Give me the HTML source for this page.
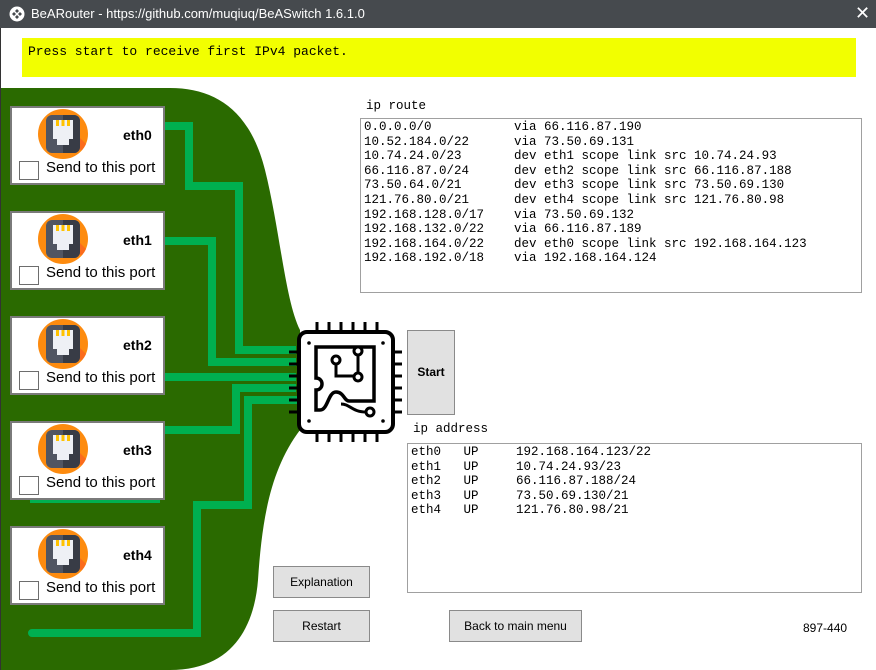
<!DOCTYPE html>
<html><head><meta charset="utf-8"><style>
*{margin:0;padding:0;box-sizing:border-box}
body{width:876px;height:670px;background:#fff;position:relative;overflow:hidden;font-family:"Liberation Sans",sans-serif}
.title{position:absolute;left:0;top:0;width:876px;height:28px;background:#464a4e;color:#fff;font-size:13px;line-height:27px;padding-left:31px}
.abs{position:absolute}
.mono{font-family:"Liberation Mono",monospace;font-size:12.5px}
.port{position:absolute;left:10px;width:155px;height:79px;background:#fff;border:2px solid #7a7a7a}
.port .nm{position:absolute;left:111px;top:19px;font-weight:bold;font-size:14px}
.port .cb{position:absolute;left:7px;top:53px;width:20px;height:19px;border:1px solid #6d6d6d;background:#fff}
.port .st{position:absolute;left:34px;top:51px;font-size:15px;color:#000}
.port svg{position:absolute;left:26px;top:1px}
.btn{position:absolute;background:#e1e1e1;border:1px solid #8a8a8a;font-size:12px;text-align:center}
.box{position:absolute;border:1px solid #a0a0a0;background:#fff;white-space:pre;line-height:14.6px;padding:1px 3px;color:#000}
</style></head><body>
<div class="title">BeARouter - https://github.com/muqiuq/BeASwitch 1.6.1.0</div>
<svg class="abs" style="left:9px;top:6px" width="16" height="16" viewBox="0 0 16 16"><circle cx="8" cy="8" r="7.5" fill="#fff"/><g fill="#464a4e"><path d="M8 3l2 2-2 2-2-2z"/><path d="M8 9l2 2-2 2-2-2z"/><path d="M3 8l2-2 2 2-2 2z"/><path d="M9 8l2-2 2 2-2 2z"/></g></svg>
<div class="abs" style="left:855px;top:3px;color:#fff;font-size:18px">✕</div>
<div class="abs mono" style="left:22px;top:38px;width:834px;height:39px;background:#f2ff00;padding:6px 6px;font-size:13px">Press start to receive first IPv4 packet.</div>

<svg class="abs" style="left:0;top:0" width="876" height="670">
<path d="M0 88 L170 88 C215 88 250 110 265 170 C280 230 285 300 300 330 L300 430 C270 470 262 520 258 580 C254 630 230 670 170 670 L0 670 Z" fill="#2a6a00"/>
<line x1="0" y1="28" x2="0" y2="670" stroke="#333" stroke-width="2"/>
<g fill="none" stroke="#00b050" stroke-width="8" stroke-linejoin="miter">
<path d="M160 126 H189 V186 H239 V350 H296"/>
<path d="M160 241 H212 V362 H296"/>
<path d="M160 377 H296"/>
<path d="M160 430 H236 V388 H296"/>
<path d="M296 400 H248 V505 H197 V633 H32" stroke-linecap="round"/>
<path d="M30 499 H160"/>
</g>
<g fill="none" stroke="#000" stroke-width="4">
<rect x="299" y="332" width="94" height="100" rx="8"/>
<path d="M316 347 H374 V401 H349 C344 401 344 392 336 392 C328 392 328 410 320 410 H316 V390 C324 390 324 378 316 378 Z" stroke-width="3.5"/>
<path d="M336 360 V376 H358 M358 376 V354" stroke-width="3"/>
</g>
<g fill="#fff" stroke="#000" stroke-width="3"><circle cx="336" cy="360" r="4"/><circle cx="358" cy="351" r="4"/><circle cx="358" cy="377" r="4"/><circle cx="370" cy="412" r="4"/></g>
<path d="M341 404 C350 404 352 412 366 412" stroke="#000" stroke-width="3" fill="none"/>
<g fill="#000"><circle cx="309" cy="343" r="1.8"/><circle cx="383" cy="343" r="1.8"/><circle cx="309" cy="421" r="1.8"/><circle cx="383" cy="421" r="1.8"/></g>
<g stroke="#000" stroke-width="3">
<path d="M317 322V332M329 322V332M341 322V332M353 322V332M365 322V332M377 322V332"/>
<path d="M317 432V442M329 432V442M341 432V442M353 432V442M365 432V442M377 432V442"/>
<path d="M289 352H299M289 364H299M289 376H299M289 388H299M289 400H299M289 412H299"/>
<path d="M393 352H402M393 364H402M393 376H402M393 388H402M393 400H402M393 412H402"/>
</g>
</svg>

<div class="port" style="top:106px"><svg width="50" height="50" viewBox="0 0 50 50"><circle cx="25" cy="25" r="25" fill="#fd8b0f"/><path d="M38 40 L44 41 A25 25 0 0 0 48 35 L41 28 Z" fill="#fb6b1c"/><rect x="8" y="6" width="34" height="38" rx="6" fill="#505562"/><path d="M25 6H36a6 6 0 0 1 6 6V38a6 6 0 0 1-6 6H25z" fill="#383c46"/><path d="M15 11H35V30H31V36H19V30H15Z" fill="#eef0f5"/><rect x="18" y="11" width="3" height="6" fill="#ffc200"/><rect x="23.5" y="11" width="3" height="6" fill="#ffc200"/><rect x="29" y="11" width="3" height="6" fill="#ffc200"/></svg><div class="nm">eth0</div><div class="cb"></div><div class="st">Send to this port</div></div>
<div class="port" style="top:211px"><svg width="50" height="50" viewBox="0 0 50 50"><circle cx="25" cy="25" r="25" fill="#fd8b0f"/><path d="M38 40 L44 41 A25 25 0 0 0 48 35 L41 28 Z" fill="#fb6b1c"/><rect x="8" y="6" width="34" height="38" rx="6" fill="#505562"/><path d="M25 6H36a6 6 0 0 1 6 6V38a6 6 0 0 1-6 6H25z" fill="#383c46"/><path d="M15 11H35V30H31V36H19V30H15Z" fill="#eef0f5"/><rect x="18" y="11" width="3" height="6" fill="#ffc200"/><rect x="23.5" y="11" width="3" height="6" fill="#ffc200"/><rect x="29" y="11" width="3" height="6" fill="#ffc200"/></svg><div class="nm">eth1</div><div class="cb"></div><div class="st">Send to this port</div></div>
<div class="port" style="top:316px"><svg width="50" height="50" viewBox="0 0 50 50"><circle cx="25" cy="25" r="25" fill="#fd8b0f"/><path d="M38 40 L44 41 A25 25 0 0 0 48 35 L41 28 Z" fill="#fb6b1c"/><rect x="8" y="6" width="34" height="38" rx="6" fill="#505562"/><path d="M25 6H36a6 6 0 0 1 6 6V38a6 6 0 0 1-6 6H25z" fill="#383c46"/><path d="M15 11H35V30H31V36H19V30H15Z" fill="#eef0f5"/><rect x="18" y="11" width="3" height="6" fill="#ffc200"/><rect x="23.5" y="11" width="3" height="6" fill="#ffc200"/><rect x="29" y="11" width="3" height="6" fill="#ffc200"/></svg><div class="nm">eth2</div><div class="cb"></div><div class="st">Send to this port</div></div>
<div class="port" style="top:421px"><svg width="50" height="50" viewBox="0 0 50 50"><circle cx="25" cy="25" r="25" fill="#fd8b0f"/><path d="M38 40 L44 41 A25 25 0 0 0 48 35 L41 28 Z" fill="#fb6b1c"/><rect x="8" y="6" width="34" height="38" rx="6" fill="#505562"/><path d="M25 6H36a6 6 0 0 1 6 6V38a6 6 0 0 1-6 6H25z" fill="#383c46"/><path d="M15 11H35V30H31V36H19V30H15Z" fill="#eef0f5"/><rect x="18" y="11" width="3" height="6" fill="#ffc200"/><rect x="23.5" y="11" width="3" height="6" fill="#ffc200"/><rect x="29" y="11" width="3" height="6" fill="#ffc200"/></svg><div class="nm">eth3</div><div class="cb"></div><div class="st">Send to this port</div></div>
<div class="port" style="top:526px"><svg width="50" height="50" viewBox="0 0 50 50"><circle cx="25" cy="25" r="25" fill="#fd8b0f"/><path d="M38 40 L44 41 A25 25 0 0 0 48 35 L41 28 Z" fill="#fb6b1c"/><rect x="8" y="6" width="34" height="38" rx="6" fill="#505562"/><path d="M25 6H36a6 6 0 0 1 6 6V38a6 6 0 0 1-6 6H25z" fill="#383c46"/><path d="M15 11H35V30H31V36H19V30H15Z" fill="#eef0f5"/><rect x="18" y="11" width="3" height="6" fill="#ffc200"/><rect x="23.5" y="11" width="3" height="6" fill="#ffc200"/><rect x="29" y="11" width="3" height="6" fill="#ffc200"/></svg><div class="nm">eth4</div><div class="cb"></div><div class="st">Send to this port</div></div>

<div class="abs mono" style="left:366px;top:99px">ip route</div>
<div class="box mono" style="left:360px;top:118px;width:502px;height:175px">0.0.0.0/0           via 66.116.87.190
10.52.184.0/22      via 73.50.69.131
10.74.24.0/23       dev eth1 scope link src 10.74.24.93
66.116.87.0/24      dev eth2 scope link src 66.116.87.188
73.50.64.0/21       dev eth3 scope link src 73.50.69.130
121.76.80.0/21      dev eth4 scope link src 121.76.80.98
192.168.128.0/17    via 73.50.69.132
192.168.132.0/22    via 66.116.87.189
192.168.164.0/22    dev eth0 scope link src 192.168.164.123
192.168.192.0/18    via 192.168.164.124</div>
<div class="btn" style="left:407px;top:330px;width:48px;height:85px;line-height:83px;font-weight:bold">Start</div>
<div class="abs mono" style="left:413px;top:422px">ip address</div>
<div class="box mono" style="left:407px;top:443px;width:455px;height:150px">eth0   UP     192.168.164.123/22
eth1   UP     10.74.24.93/23
eth2   UP     66.116.87.188/24
eth3   UP     73.50.69.130/21
eth4   UP     121.76.80.98/21</div>
<div class="btn" style="left:273px;top:566px;width:97px;height:32px;line-height:30px">Explanation</div>
<div class="btn" style="left:273px;top:610px;width:97px;height:32px;line-height:30px">Restart</div>
<div class="btn" style="left:449px;top:610px;width:133px;height:32px;line-height:30px">Back to main menu</div>
<div class="abs" style="left:803px;top:621px;font-size:12px">897-440</div>
</body></html>
